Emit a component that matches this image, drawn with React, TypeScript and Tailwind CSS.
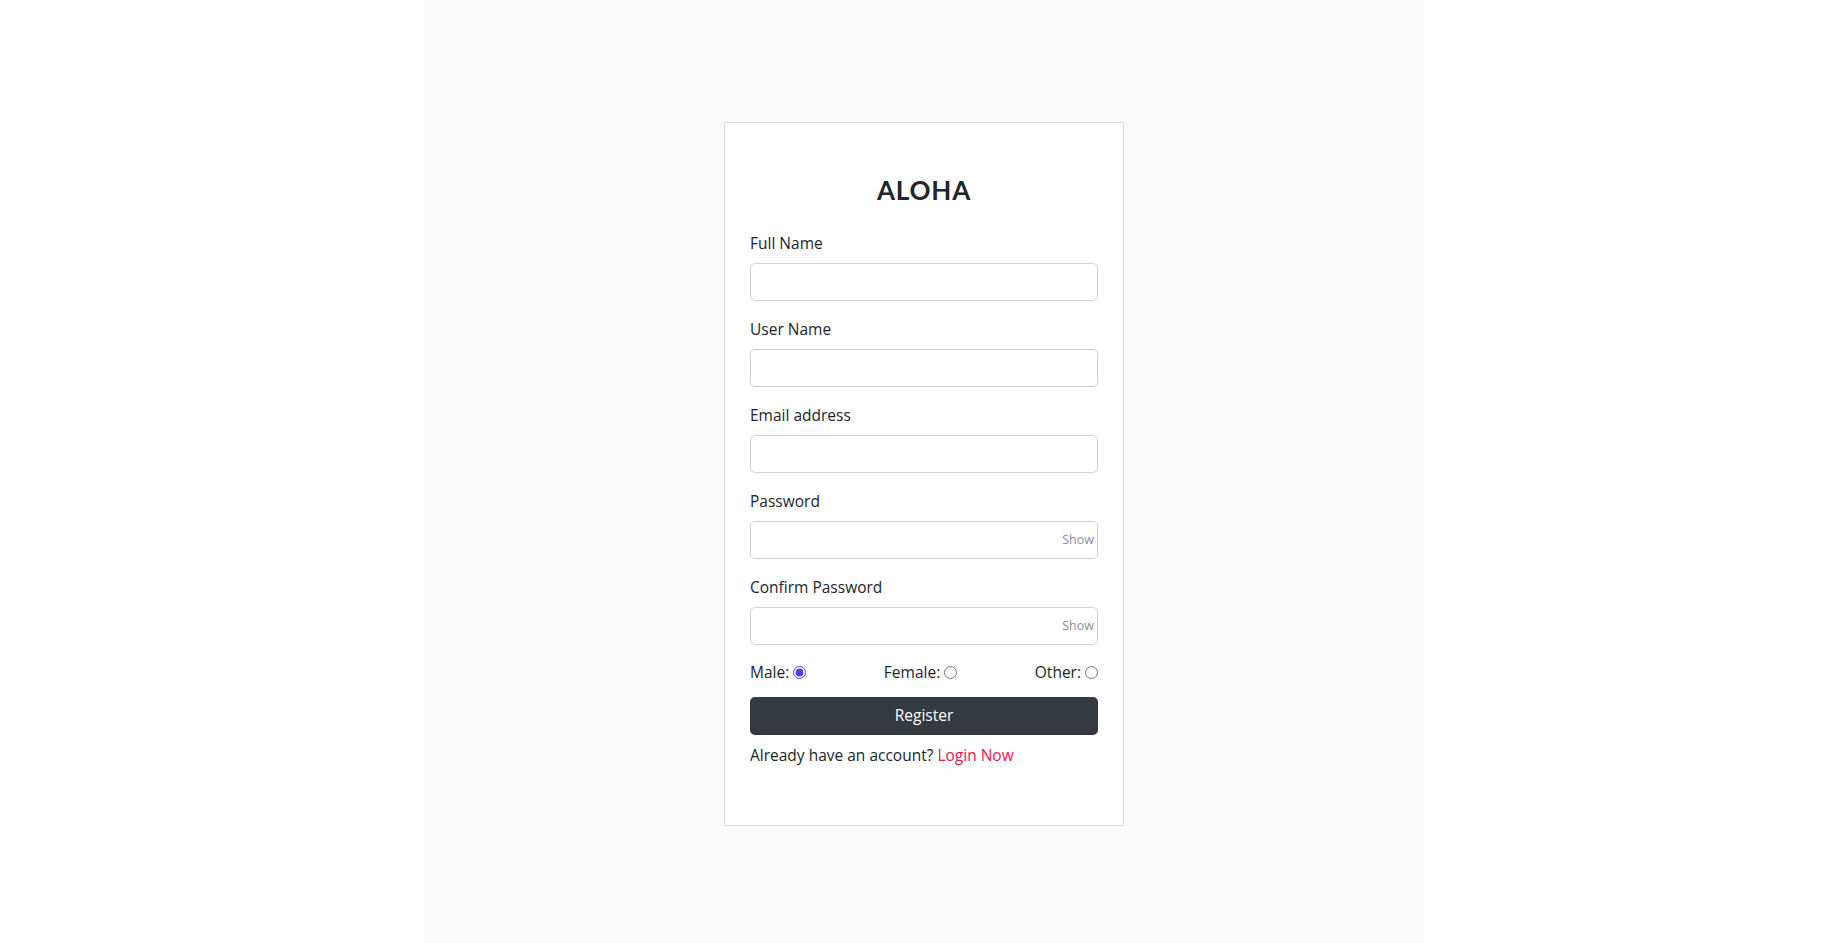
import React from "react";

function Field({ label, type = "text", show = false }: { label: string; type?: string; show?: boolean }) {
  return (
    <div className="mb-4">
      <label className="mb-2 block text-[15.5px] leading-6 text-[#212529]">{label}</label>
      <div className="relative">
        <input
          type={type}
          className="block h-[38px] w-full rounded-[5px] border border-[#ced4da] bg-white px-3 text-[15.5px] outline-none"
        />
        {show && (
          <span className="absolute right-[4px] top-1/2 -translate-y-1/2 text-[12.5px] leading-4 text-[#8a8f94]">
            Show
          </span>
        )}
      </div>
    </div>
  );
}

export default function App() {
  return (
    <div className="min-h-screen bg-white" style={{ fontFamily: '"Open Sans", "Noto Sans", sans-serif' }}>
      <div className="mx-auto min-h-screen w-[1000px] bg-[#fcfcfc] pt-[122px] pb-[60px]">
        <div className="mx-auto w-[400px] border border-[#dcdcdc] bg-white px-[25px] pt-[52px] pb-[58px]">
          <h2
            className="mb-[26px] text-center text-[26px] font-bold leading-[30px] tracking-[0.8px] text-[#212529]"
            style={{ fontFamily: 'Lato, "Open Sans", sans-serif' }}
          >
            ALOHA
          </h2>
          <form onSubmit={(e) => e.preventDefault()}>
            <Field label="Full Name" />
            <Field label="User Name" />
            <Field label="Email address" type="email" />
            <Field label="Password" type="password" show />
            <Field label="Confirm Password" type="password" show />
            <div className="flex h-6 items-center justify-between text-[15.5px] text-[#212529]">
              <label className="flex items-center">
                Male:
                <input type="radio" name="gender" defaultChecked className="m-0 ml-[4px] -mt-[1px] h-[13px] w-[13px] accent-[#4b3ff2]" />
              </label>
              <label className="flex items-center">
                Female:
                <input type="radio" name="gender" className="m-0 ml-[4px] -mt-[1px] h-[13px] w-[13px] accent-[#4b3ff2]" />
              </label>
              <label className="flex items-center">
                Other:
                <input type="radio" name="gender" className="m-0 ml-[4px] -mt-[1px] h-[13px] w-[13px] accent-[#4b3ff2]" />
              </label>
            </div>
            <button
              type="submit"
              className="mt-3 block h-[38px] w-full rounded-[5px] bg-[#343a40] text-[15.5px] text-white"
            >
              Register
            </button>
            <p className="mt-2 text-[15.5px] leading-6 text-[#212529]">
              Already have an account? <a className="text-[#f0134d]" href="#">Login Now</a>
            </p>
          </form>
        </div>
      </div>
    </div>
  );
}
